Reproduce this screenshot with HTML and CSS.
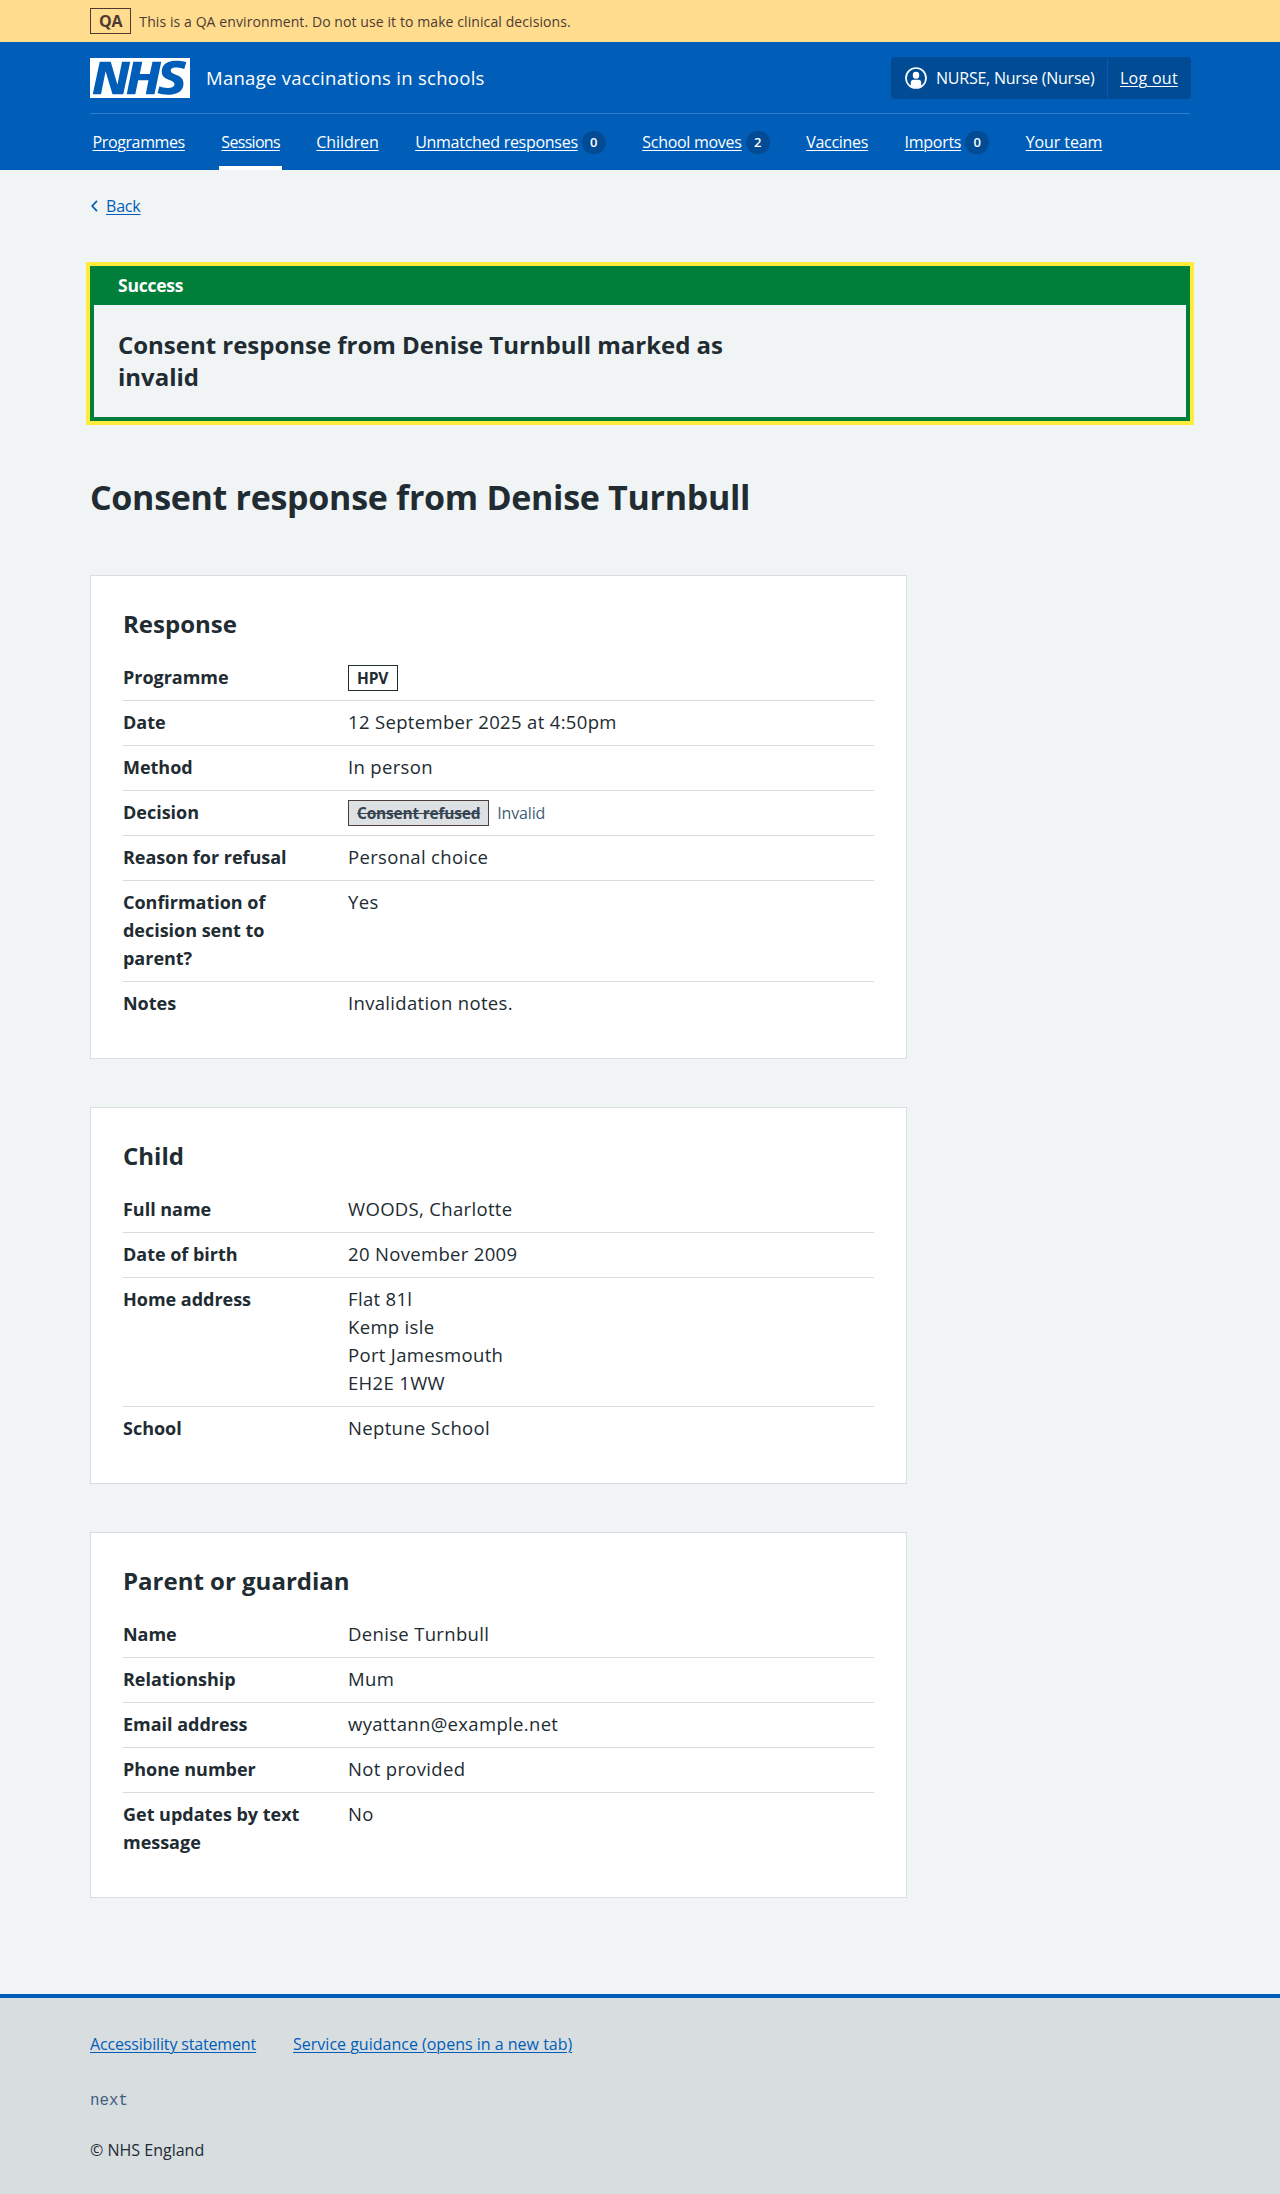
FILE: index.html
```html
<!DOCTYPE html>
<html lang="en">
<head>
<meta charset="utf-8">
<title>Consent response from Denise Turnbull - Manage vaccinations in schools</title>
<link rel="stylesheet" href="styles.css">
</head>
<body>
<div class="environment">
  <div class="container environment__inner"><strong class="tag tag--env">QA</strong><span class="environment__text">This is a QA environment. Do not use it to make clinical decisions.</span></div>
</div>
<header class="header">
  <div class="container">
    <div class="header__top">
      <svg class="header__logo" viewBox="0 0 200 80" width="100" height="40" role="img" aria-label="NHS"><path fill="#fff" d="M200 0v80H0V0h200Zm-27.5 5.5c-14.5 0-29 5-29 22 0 10.2 7.7 13.5 14.7 16.3l.7.3c5.4 2 10.1 3.9 10.1 8.4 0 6.5-8.5 7.5-14 7.5s-12.5-1.5-16-3.5L135 70c5.5 2 13.5 3.5 20 3.5 15.5 0 32-4.500 32-22.500 0-19.500-25.500-16.500-25.500-25.500 0-5.500 5.500-6.500 12.500-6.500a35 35 0 0 1 14.500 3l4-13.500c-4.500-2-12-3-20-3Zm-131 2h-22l-14 65H22l9-45h.5l13.500 45h21.500l14-65H64l-9 45h-.5l-13-45Zm63 0h-18l-13 65h17l6-28H117l-5.500 28H129l13.500-65H125L119.500 32h-20l5-24.500Z"/></svg>
      <span class="header__service">Manage vaccinations in schools</span>
      <div class="account">
        <div class="account__user">
          <svg class="account__icon" viewBox="0 0 22 22" width="22" height="22" aria-hidden="true"><circle cx="11" cy="11" r="10" fill="none" stroke="#fff" stroke-width="1.700"/><rect x="7.800" y="4.800" width="6.400" height="7" rx="3" fill="#fff"/><path fill="#fff" d="M5.800 18.800v-3.300c0-1.700 1.100-2.700 2.700-2.700h5c1.600 0 2.700 1 2.700 2.700v3.300c-3.200 2.600-7.200 2.600-10.400 0Z"/></svg>
          <span class="account__name">NURSE, Nurse (Nurse)</span>
        </div>
        <a class="account__logout" href="#">Log out</a>
      </div>
    </div>
    <nav class="nav">
      <a class="nav__item" href="#"><span>Programmes</span></a>
      <a class="nav__item nav__item--current" href="#"><span>Sessions</span></a>
      <a class="nav__item" href="#"><span>Children</span></a>
      <a class="nav__item" href="#"><span>Unmatched responses</span><b class="count">0</b></a>
      <a class="nav__item" href="#"><span>School moves</span><b class="count">2</b></a>
      <a class="nav__item" href="#"><span>Vaccines</span></a>
      <a class="nav__item" href="#"><span>Imports</span><b class="count">0</b></a>
      <a class="nav__item" href="#"><span>Your team</span></a>
    </nav>
  </div>
</header>
<main class="container main">
  <a class="back" href="#"><svg width="7" height="12" viewBox="0 0 7 12" aria-hidden="true"><path d="M6 .8 1.200 6 6 11.200" fill="none" stroke="#005eb8" stroke-width="1.700"/></svg><span>Back</span></a>
  <section class="banner">
    <h2 class="banner__header">Success</h2>
    <div class="banner__content"><h3 class="banner__heading">Consent response from Denise Turnbull marked as invalid</h3></div>
  </section>
  <h1 class="title">Consent response from Denise Turnbull</h1>
  <div class="cards">
    <section class="card">
      <h2 class="card__heading">Response</h2>
      <dl class="summary">
        <div class="summary__row"><dt>Programme</dt><dd class="summary__tags"><strong class="tag tag--white">HPV</strong></dd></div>
        <div class="summary__row"><dt>Date</dt><dd>12 September 2025 at 4:50pm</dd></div>
        <div class="summary__row"><dt>Method</dt><dd>In person</dd></div>
        <div class="summary__row"><dt>Decision</dt><dd class="summary__tags"><strong class="tag tag--grey"><s>Consent refused</s></strong><span class="secondary">Invalid</span></dd></div>
        <div class="summary__row"><dt>Reason for refusal</dt><dd>Personal choice</dd></div>
        <div class="summary__row"><dt>Confirmation of decision sent to parent?</dt><dd>Yes</dd></div>
        <div class="summary__row"><dt>Notes</dt><dd>Invalidation notes.</dd></div>
      </dl>
    </section>
    <section class="card">
      <h2 class="card__heading">Child</h2>
      <dl class="summary">
        <div class="summary__row"><dt>Full name</dt><dd>WOODS, Charlotte</dd></div>
        <div class="summary__row"><dt>Date of birth</dt><dd>20 November 2009</dd></div>
        <div class="summary__row"><dt>Home address</dt><dd>Flat 81l<br>Kemp isle<br>Port Jamesmouth<br>EH2E 1WW</dd></div>
        <div class="summary__row"><dt>School</dt><dd>Neptune School</dd></div>
      </dl>
    </section>
    <section class="card">
      <h2 class="card__heading">Parent or guardian</h2>
      <dl class="summary">
        <div class="summary__row"><dt>Name</dt><dd>Denise Turnbull</dd></div>
        <div class="summary__row"><dt>Relationship</dt><dd>Mum</dd></div>
        <div class="summary__row"><dt>Email address</dt><dd>wyattann@example.net</dd></div>
        <div class="summary__row"><dt>Phone number</dt><dd>Not provided</dd></div>
        <div class="summary__row"><dt>Get updates by text message</dt><dd>No</dd></div>
      </dl>
    </section>
  </div>
</main>
<footer class="footer">
  <div class="container">
    <div class="footer__links"><a href="#">Accessibility statement</a><a class="footer__guidance" href="#">Service guidance (opens in a new tab)</a></div>
    <p class="footer__version">next</p>
    <p class="footer__copyright">© NHS England</p>
  </div>
</footer>
</body>
</html>
```
FILE: styles.css
```css
* { box-sizing: border-box; }
body { margin: 0; background: #f0f4f5; color: #212b32; font: 18.5px/28px "Open Sans", "Noto Sans", sans-serif; }
h1, h2, h3, p, dl, dd { margin: 0; font-size: inherit; }
a { color: #005eb8; text-underline-offset: 2px; text-decoration-thickness: 1px; }
.container { width: 1100px; margin: 0 auto; }

.tag { display: inline-block; padding: 0 8px; border: 1px solid; font-size: 15.5px; font-weight: 700; line-height: 24px; letter-spacing: -.22px; white-space: nowrap; }
.tag--white { padding-right: 9px; background: #fff; }
.tag--grey { color: #354450; border-color: #4d3d3d; background: #dde1e4; }
.tag--env { font-size: 16px; }

.environment { background: #ffdc8e; color: #4d3b33; }
.environment__inner { display: flex; align-items: center; gap: 8px; height: 42px; font-size: 14px; letter-spacing: .09px; }
.environment__text { padding-top: 2px; }

.header { background: #005eb8; color: #fff; }
.header a { color: #fff; }
.header__top { display: flex; align-items: center; height: 72px; padding-top: 1px; border-bottom: 1px solid rgba(255, 255, 255, .2); }
.header__service { margin-left: 16px; padding-bottom: 1px; letter-spacing: .28px; }
.account { display: flex; height: 42px; margin: 0 -1px 0 auto; padding: 1px 0; border-radius: 4px; background: #004b93; font-size: 16px; line-height: 40px; }
.account__user { display: flex; align-items: center; width: 217px; padding-left: 14px; border-right: 1px solid #005eb8; letter-spacing: -.23px; }
.account__icon { margin-right: 9px; }
.account__logout { width: 83px; padding-left: 12px; letter-spacing: .27px; }

.nav { display: flex; gap: 31.5px; height: 56px; font-size: 16px; line-height: 56px; }
.nav__item { position: relative; display: flex; align-items: center; padding: 0 2.500px; letter-spacing: -.28px; text-decoration: none; white-space: nowrap; }
.nav__item span { text-decoration: underline; text-decoration-thickness: 1px; text-underline-offset: 2px; }
.nav__item:first-child { letter-spacing: -.38px; }
.nav__item--current { letter-spacing: -.7px; }
.nav__item:nth-child(3), .nav__item:last-child { letter-spacing: -.1px; }
.nav__item--current::after { content: ""; position: absolute; left: 0; right: 0; bottom: 0; height: 4px; background: #fff; }
.count { width: 24px; height: 23px; margin-left: 4px; border-radius: 12px; background: #004b93; font-size: 13px; font-weight: 600; line-height: 23px; text-align: center; letter-spacing: 0; }

.main { padding: 24px 0 96px; }
.back { display: flex; align-items: center; gap: 8px; width: max-content; height: 24px; padding-left: 1px; font-size: 16px; letter-spacing: -.2px; text-decoration: none; }
.back span { text-decoration: underline; text-decoration-thickness: 1px; }
.banner { margin-top: 48px; border: 4px solid #007f3b; outline: 4px solid #ffeb3b; }
.banner__header { height: 35px; padding-left: 24px; background: #007f3b; color: #fff; font-size: 17.500px; font-weight: 700; line-height: 31px; letter-spacing: -.25px; }
.banner__content { padding: 24px 24px; }
.banner__heading { max-width: 660px; font-size: 24px; font-weight: 700; line-height: 32px; letter-spacing: -.02px; }
.title { margin: 54px 0 56px; font-size: 34px; font-weight: 700; line-height: 44px; letter-spacing: -.3px; }

.cards { display: grid; gap: 48px; width: 817px; }
.card { padding: 32px; border: 1px solid #d8dde0; background: #fff; }
.card__heading { margin-bottom: 16px; font-size: 24px; font-weight: 700; line-height: 32px; }
.summary__row { display: grid; grid-template-columns: 185px 1fr; column-gap: 40px; padding: 7px 0 9px; border-bottom: 1px solid #d8dde0; }
.summary__row:last-child { border-bottom: 0; }
.summary dt { font-size: 18px; font-weight: 700; letter-spacing: -.02px; }
.summary dd { letter-spacing: .33px; }
.summary .summary__tags { display: flex; align-items: center; gap: 8px; height: 28px; padding-top: 2px; letter-spacing: 0; }
.secondary { color: #425f78; font-size: 16px; letter-spacing: -.15px; }

.footer { height: 200px; padding-top: 32px; border-top: 4px solid #005eb8; background: #d8dde0; font-size: 16px; }
.footer__links { display: flex; gap: 37px; letter-spacing: -.16px; }
.footer__guidance { letter-spacing: 0; }
.footer__version { margin-top: 29px; color: #3f5f7d; font-family: "Liberation Mono", monospace; font-size: 15.800px; }
.footer__copyright { margin-top: 21px; }
```
